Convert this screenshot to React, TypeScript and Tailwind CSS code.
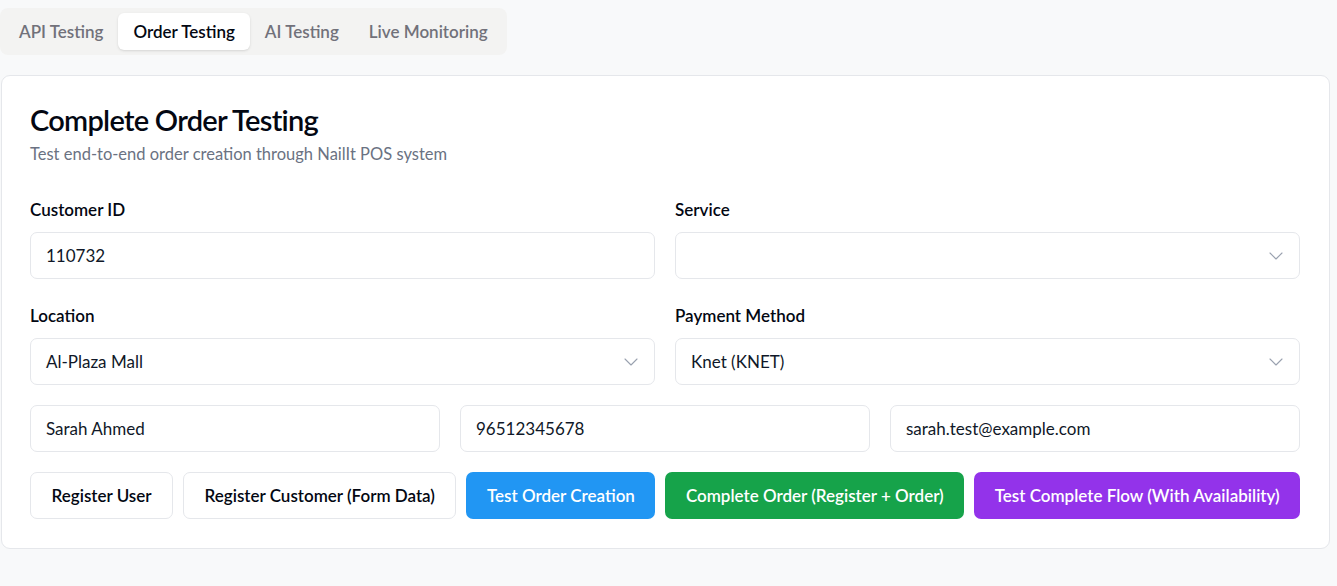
import React, { useState } from 'react';
import { ChevronDown } from 'lucide-react';

const tabs = ['API Testing', 'Order Testing', 'AI Testing', 'Live Monitoring'];

const Field = ({ value }: { value: string }) => (
  <div className="h-[47px] rounded-[7px] border border-gray-200 bg-white px-[15px] flex items-center text-[17px] text-gray-900">
    {value}
  </div>
);

const Select = ({ value }: { value: string }) => (
  <div className="h-[47px] rounded-[7px] border border-gray-200 bg-white pl-[15px] pr-[11px] flex items-center justify-between text-[17px] text-gray-900">
    <span>{value}</span>
    <ChevronDown className="w-[24px] h-[24px] text-gray-400" strokeWidth={1.1} />
  </div>
);

const btn = 'h-[47px] px-[20.5px] rounded-[7px] text-[17px] font-semibold whitespace-nowrap flex-none';

export default function App() {
  const [active, setActive] = useState('Order Testing');

  return (
    <div className="min-h-screen bg-[#f8f9fa] font-['Lato',sans-serif] text-gray-950">
      <div className="pt-[8px]">
        <div className="inline-flex items-center h-[47px] rounded-[8px] bg-[#f3f3f2] px-[4px]">
          {tabs.map(t => (
            <button
              key={t}
              onClick={() => setActive(t)}
              className={`h-[37px] px-[15px] rounded-[6px] text-[17px] font-semibold whitespace-nowrap ${
                active === t ? 'bg-white text-gray-950 shadow-sm' : 'text-[#71717a]'
              }`}
            >
              {t}
            </button>
          ))}
        </div>
      </div>

      <div className="mt-[20px] ml-[1px] w-[1329px] rounded-[9px] border border-gray-200 bg-white pl-[28px] pr-[29px] pt-[26px] pb-[29px]">
        <h2 className="text-[29px] font-semibold leading-[36px] tracking-tight">Complete Order Testing</h2>
        <p className="mt-[4px] text-[16.5px] text-gray-500 leading-[24px]">Test end-to-end order creation through NailIt POS system</p>

        <div className="mt-[32px] grid grid-cols-2 gap-x-[20px] gap-y-[25px]">
          <div>
            <label className="block text-[17px] font-semibold leading-[24px] mb-[10px]">Customer ID</label>
            <Field value="110732" />
          </div>
          <div>
            <label className="block text-[17px] font-semibold leading-[24px] mb-[10px]">Service</label>
            <Select value="" />
          </div>
          <div>
            <label className="block text-[17px] font-semibold leading-[24px] mb-[10px]">Location</label>
            <Select value="Al-Plaza Mall" />
          </div>
          <div>
            <label className="block text-[17px] font-semibold leading-[24px] mb-[10px]">Payment Method</label>
            <Select value="Knet (KNET)" />
          </div>
        </div>

        <div className="mt-[20px] grid grid-cols-3 gap-[20px]">
          <Field value="Sarah Ahmed" />
          <Field value="96512345678" />
          <Field value="sarah.test@example.com" />
        </div>

        <div className="mt-[20px] flex gap-[10px]">
          <button className={`${btn} border border-gray-200 bg-white`}>Register User</button>
          <button className={`${btn} border border-gray-200 bg-white`}>Register Customer (Form Data)</button>
          <button className={`${btn} bg-[#2196f3] text-white`}>Test Order Creation</button>
          <button className={`${btn} bg-[#16a34a] text-white`}>Complete Order (Register + Order)</button>
          <button className={`${btn} bg-[#9333ea] text-white`}>Test Complete Flow (With Availability)</button>
        </div>
      </div>
    </div>
  );
}
